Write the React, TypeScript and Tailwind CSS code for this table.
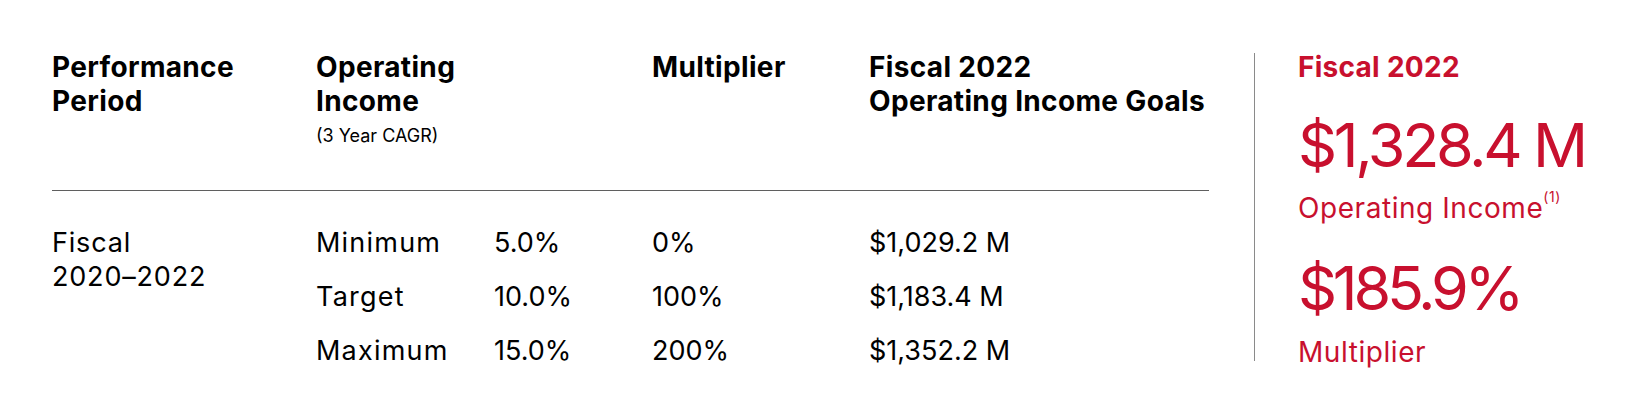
import React from "react";

const rows = [
  { label: "Minimum", cagr: "5.0%", mult: "0%", goal: "$1,029.2 M" },
  { label: "Target", cagr: "10.0%", mult: "100%", goal: "$1,183.4 M" },
  { label: "Maximum", cagr: "15.0%", mult: "200%", goal: "$1,352.2 M" },
];

export default function App() {
  return (
    <div
      className="w-[1632px] h-[417px] bg-white flex text-black"
      style={{ fontFamily: "Inter, 'Noto Sans', sans-serif" }}
    >
      <div className="pl-[52px] pt-[50px] w-[1209px] shrink-0">
        <div className="grid grid-cols-[264px_336px_217px_331px] items-start text-[28px] font-bold leading-[34px] tracking-[0.012em]">
          <div>
            Performance
            <br />
            Period
          </div>
          <div>
            <div>
              Operating
              <br />
              Income
            </div>
            <div className="mt-[7px] text-[18px] leading-[22px] font-normal tracking-normal">
              (3 Year CAGR)
            </div>
          </div>
          <div>Multiplier</div>
          <div className="whitespace-nowrap">
            Fiscal 2022
            <br />
            Operating Income Goals
          </div>
        </div>
        <div className="mt-[43px] h-px bg-[#5f5f5f]" />
        <div className="mt-[35px] grid grid-cols-[264px_178px_158px_217px_331px] gap-y-[20px] text-[27px] leading-[34px]">
          <div className="row-span-3 tracking-[0.03em]">
            Fiscal
            <br />
            2020–2022
          </div>
          {rows.map((r) => (
            <React.Fragment key={r.label}>
              <div className="tracking-[0.045em]">{r.label}</div>
              <div>{r.cagr}</div>
              <div>{r.mult}</div>
              <div>{r.goal}</div>
            </React.Fragment>
          ))}
        </div>
      </div>
      <div className="ml-[45px] mt-[53px] h-[308px] border-l border-[#8a8a8a] pl-[43px] text-[#c8102e]">
        <div className="text-[28px] font-bold leading-[28px] tracking-[0.01em]">Fiscal 2022</div>
        <div className="mt-[33px] text-[61px] leading-[62px] tracking-[-0.055em] whitespace-nowrap">
          $1,328.4 M
        </div>
        <div className="mt-[15px] text-[28px] leading-[34px] whitespace-nowrap tracking-[0.02em]">
          Operating Income
          <span className="inline-block align-top text-[14px] leading-[14px] -translate-y-[1px]">(1)</span>
        </div>
        <div className="mt-[32px] text-[61px] leading-[62px] tracking-[-0.07em]">$185.9%</div>
        <div className="mt-[16px] text-[28px] leading-[34px] tracking-[0.02em]">Multiplier</div>
      </div>
    </div>
  );
}
